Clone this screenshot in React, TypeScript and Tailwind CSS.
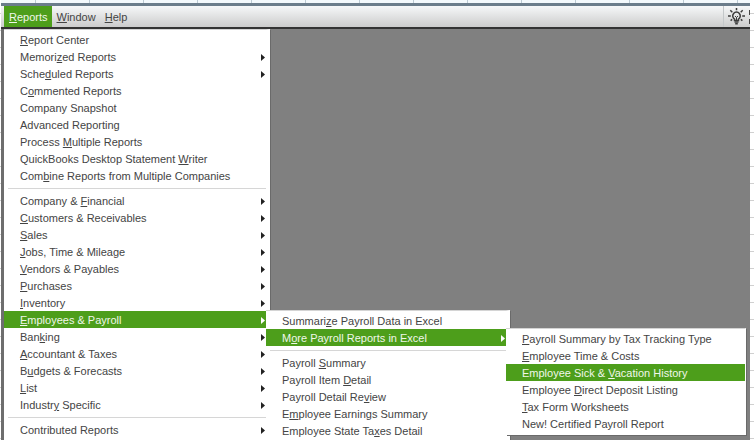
import { ReactNode } from 'react';
import clsx from 'clsx';

type Item = {
  // "_" goes before the access key letter
  label: string;
  arrow?: boolean;
  active?: boolean;
  submenu?: ReactNode;
};

const payrollExcel: Item[][] = [
  [
    { label: '_Payroll Summary by Tax Tracking Type' },
    { label: '_Employee Time & Costs' },
    { label: 'Employee Sick & _Vacation History', active: true },
    { label: 'Employee _Direct Deposit Listing' },
    { label: '_Tax Form Worksheets' },
    { label: 'New! Certified Payroll Report' },
  ],
];

const employeesPayroll: Item[][] = [
  [
    { label: 'Summari_ze Payroll Data in Excel' },
    {
      label: 'M_ore Payroll Reports in Excel',
      arrow: true,
      active: true,
      submenu: <Menu groups={payrollExcel} className="left-full -top-px w-[240px] border-r pb-0.5" />,
    },
  ],
  [
    { label: 'Payroll _Summary' },
    { label: 'Payroll Item _Detail' },
    { label: 'Payroll Detail Re_view' },
    { label: 'E_mployee Earnings Summary' },
    { label: 'Employee State Ta_xes Detail' },
  ],
];

const reports: Item[][] = [
  [
    { label: '_Report Center' },
    { label: 'Memori_zed Reports', arrow: true },
    { label: 'Sche_duled Reports', arrow: true },
    { label: 'C_ommented Reports' },
    { label: 'Company Snapshot' },
    { label: 'Advanced Reporting' },
    { label: 'Process _Multiple Reports' },
    { label: 'QuickBooks Desktop Statement _Writer' },
    { label: 'Com_bine Reports from Multiple Companies' },
  ],
  [
    { label: 'Company & _Financial', arrow: true },
    { label: '_Customers & Receivables', arrow: true },
    { label: '_Sales', arrow: true },
    { label: '_Jobs, Time & Mileage', arrow: true },
    { label: '_Vendors & Payables', arrow: true },
    { label: '_Purchases', arrow: true },
    { label: '_Inventory', arrow: true },
    {
      label: '_Employees & Payroll',
      arrow: true,
      active: true,
      submenu: <Menu groups={employeesPayroll} className="left-full -top-px w-[244px] border-r-4 pb-5" />,
    },
    { label: 'Ban_king', arrow: true },
    { label: '_Accountant & Taxes', arrow: true },
    { label: 'B_udgets & Forecasts', arrow: true },
    { label: '_List', arrow: true },
    { label: 'Industr_y Specific', arrow: true },
  ],
  [{ label: 'Contributed Reports', arrow: true }],
];

function Label({ text }: { text: string }) {
  const i = text.indexOf('_');
  if (i < 0) return <span>{text}</span>;
  return (
    <span>
      {text.slice(0, i)}
      <span className="underline underline-offset-1">{text[i + 1]}</span>
      {text.slice(i + 2)}
    </span>
  );
}

function Menu({ groups, className }: { groups: Item[][]; className: string }) {
  return (
    <div className={clsx('absolute z-10 border-t border-b border-white border-t-[#d4d4d4] bg-white pt-px shadow-[1px_1px_0_#6a6a6a]', className)}>
      {groups.map((group, g) => (
        <ul key={g}>
          {g > 0 && <li role="separator" className="ml-1 h-2 pt-1"><div className="h-px bg-[#d6d6d6]" /></li>}
          {group.map((item) => (
            <li key={item.label} className="relative">
              <button
                type="button"
                className={clsx(
                  'flex h-[17px] w-full items-center justify-between pt-px pr-px pl-4 text-left text-[11px] leading-4 whitespace-nowrap',
                  item.active ? 'bg-[#4d9e1b] text-[#f0f7ea]' : 'text-[#444]',
                )}
              >
                <Label text={item.label} />
                {item.arrow && (
                  <svg viewBox="0 0 4 7" className={clsx('h-[7px] w-1', item.active ? 'fill-white' : 'fill-[#222]')}>
                    <path d="M0 0 4 3.5 0 7z" />
                  </svg>
                )}
              </button>
              {item.submenu}
            </li>
          ))}
        </ul>
      ))}
    </div>
  );
}

function Bulb() {
  return (
    <svg viewBox="0 0 17 17" className="size-[17px]" fill="none" stroke="#3c3c3c" strokeWidth="1.5">
      <path d="M6.5 12.5v-1.4a3.8 3.8 0 1 1 4 0v1.4z" />
      <path d="M6.5 14h4M7.2 15.8h2.6" />
      <path d="M7 8l1.5 1.5L10 8M8.5 9.5v2.8" strokeWidth="1" />
      <path d="M8.5 0v2.2M2.3 2.3 4.3 4.2M14.7 2.3 12.7 4.2M0 8h2.8M14.2 8H17M2.6 12.6 4.2 11.4M14.4 12.6 12.8 11.4" />
    </svg>
  );
}

export default function App() {
  return (
    <div className="flex h-screen flex-col overflow-hidden bg-white bg-[repeating-linear-gradient(to_bottom,transparent_0_13px,#d0d0d0_13px_14px,transparent_14px_17px)] pr-1 pl-px font-['Liberation_Sans',Arial,sans-serif]">
      <div className="h-[3px] shrink-0 bg-[#f3f9fc] bg-[repeating-linear-gradient(to_right,transparent_0_34px,#bccad3_34px_35px,transparent_35px_54px)]" />
      <div className="h-[3px] shrink-0 bg-[#6b7d8b]" />
      <header className="relative flex h-[23px] shrink-0 items-stretch border-b-2 border-[#333] bg-linear-to-b from-[#f6f8f9] to-[#cccccc] pl-[3px] text-[11px] text-[#444]">
        <nav className="flex">
          <div className="relative flex">
            <button type="button" className="bg-[#4d9e1b] pt-px pr-1 pl-[5px] text-[#f0f7ea]"><Label text="_Reports" /></button>
            <Menu groups={reports} className="top-[23px] left-0 h-screen w-[266px] border-r-4" />
          </div>
          <button type="button" className="pt-px pr-1 pl-[5px]"><Label text="_Window" /></button>
          <button type="button" className="pt-px pr-1 pl-[5px]"><Label text="_Help" /></button>
        </nav>
        <div className="ml-auto flex items-center gap-1 border-l border-[#c4c8ca] pl-1">
          <button type="button" aria-label="Tips"><Bulb /></button>
          <div className="flex flex-col gap-1">
            <div className="h-[5px] w-px bg-[#444]" />
            <div className="h-[5px] w-px bg-[#444]" />
          </div>
        </div>
      </header>
      <main className="flex-1 border-l-[3px] border-[#6e6e6e] bg-[#808080]" />
    </div>
  );
}
